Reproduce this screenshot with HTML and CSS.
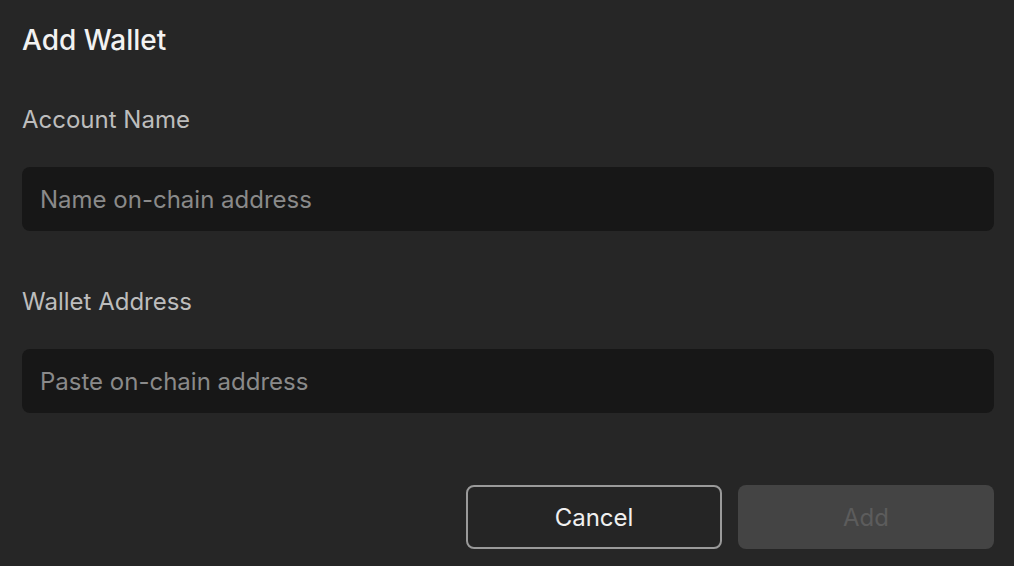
FILE: index.html
```html
<!DOCTYPE html>
<html>
<head>
<meta charset="utf-8">
<link rel="stylesheet" href="styles.css">
</head>
<body>
<div class="dialog">
  <h1 class="title">Add Wallet</h1>
  <div class="fields">
    <div class="field">
      <label class="label">Account Name</label>
      <input class="input" type="text" placeholder="Name on-chain address">
    </div>
    <div class="field">
      <label class="label">Wallet Address</label>
      <input class="input" type="text" placeholder="Paste on-chain address">
    </div>
  </div>
  <div class="actions">
    <button class="btn btn-cancel">Cancel</button>
    <button class="btn btn-add" disabled>Add</button>
  </div>
</div>
</body>
</html>
```
FILE: styles.css
```css
html, body {
  margin: 0;
  padding: 0;
  background: #262626;
  font-family: Inter, "Noto Sans", sans-serif;
}
.dialog {
  padding: 22px 20px 0 22px;
  display: flex;
  flex-direction: column;
}
.title {
  margin: 0;
  font-size: 28px;
  font-weight: 500;
  line-height: 36px;
  color: #f2f2f2;
}
.fields {
  margin-top: 46px;
  display: flex;
  flex-direction: column;
  gap: 55px;
}
.field {
  display: flex;
  flex-direction: column;
  gap: 31px;
}
.label {
  font-size: 24px;
  line-height: 32px;
  color: #bdbdbd;
}
.input {
  box-sizing: border-box;
  height: 64px;
  width: 100%;
  border: none;
  outline: none;
  border-radius: 8px;
  background: #171717;
  padding: 0 18px;
  font-family: inherit;
  font-size: 24px;
  color: #e0e0e0;
}
.input::placeholder {
  color: #8a8a8a;
}
.actions {
  margin-top: 72px;
  display: flex;
  justify-content: flex-end;
  gap: 16px;
}
.btn {
  box-sizing: border-box;
  width: 256px;
  height: 64px;
  border-radius: 8px;
  font-family: inherit;
  font-size: 24px;
}
.btn-cancel {
  background: #252525;
  border: 2px solid #9a9a9a;
  color: #f0f0f0;
}
.btn-add {
  background: #444444;
  border: none;
  color: #5c5c5c;
}
```
